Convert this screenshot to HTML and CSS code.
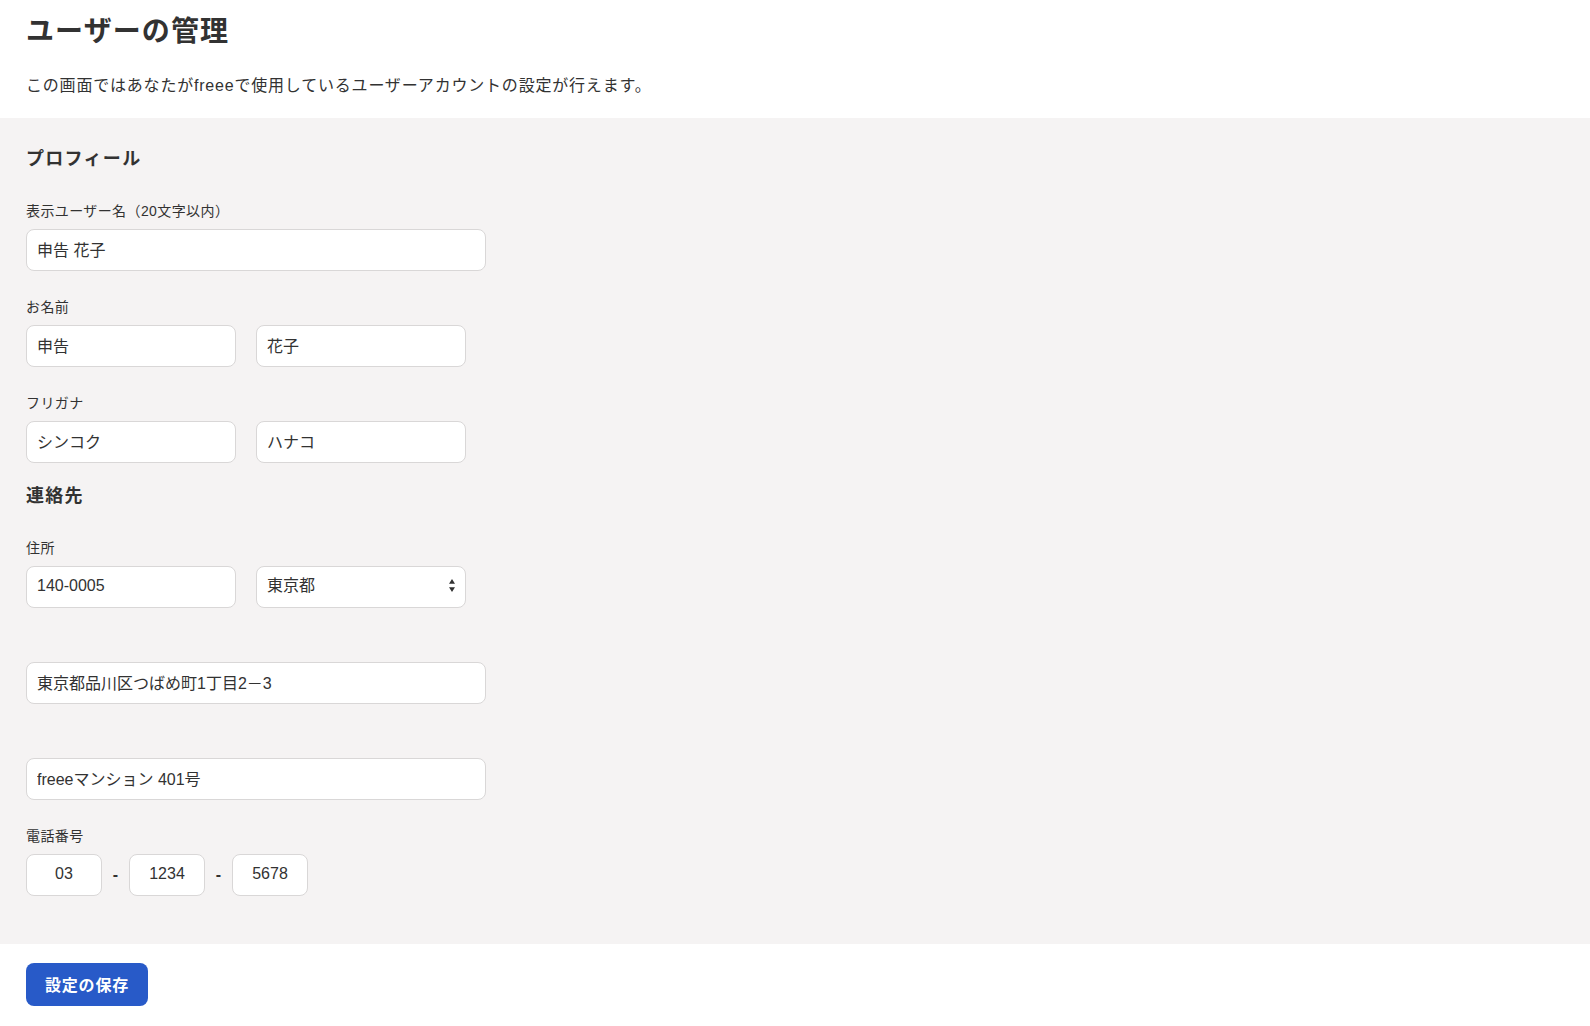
FILE: index.html
```html
<!DOCTYPE html>
<html lang="ja">
<head>
<meta charset="utf-8">
<title>ユーザーの管理</title>
<link rel="stylesheet" href="styles.css">
</head>
<body>
<header class="page-header">
  <h1 class="page-title">ユーザーの管理</h1>
  <p class="page-lead">この画面ではあなたがfreeeで使用しているユーザーアカウントの設定が行えます。</p>
</header>
<main class="panel">
  <section class="section">
    <h2 class="section-title">プロフィール</h2>
    <div class="field">
      <label class="field-label">表示ユーザー名（20文字以内）</label>
      <input class="input input-wide" type="text" value="申告 花子">
    </div>
    <div class="field">
      <label class="field-label">お名前</label>
      <div class="row">
        <input class="input input-half" type="text" value="申告">
        <input class="input input-half" type="text" value="花子">
      </div>
    </div>
    <div class="field">
      <label class="field-label">フリガナ</label>
      <div class="row">
        <input class="input input-half" type="text" value="シンコク">
        <input class="input input-half" type="text" value="ハナコ">
      </div>
    </div>
  </section>
  <section class="section section-contact">
    <h2 class="section-title">連絡先</h2>
    <div class="field">
      <label class="field-label">住所</label>
      <div class="row">
        <input class="input input-half" type="text" value="140-0005">
        <div class="select-wrap">
          <select class="input select">
            <option>東京都</option>
          </select>
          <svg class="select-arrows" width="6" height="13" viewBox="0 0 6 13" aria-hidden="true">
            <path d="M3 0 L6 4.8 L0 4.8 Z M0 8.2 L6 8.2 L3 13 Z" fill="#323232"/>
          </svg>
        </div>
      </div>
    </div>
    <div class="field">
      <label class="field-label"></label>
      <input class="input input-wide" type="text" value="東京都品川区つばめ町1丁目2－3">
    </div>
    <div class="field">
      <label class="field-label"></label>
      <input class="input input-wide" type="text" value="freeeマンション 401号">
    </div>
    <div class="field">
      <label class="field-label">電話番号</label>
      <div class="phone-row">
        <input class="input input-phone" type="text" value="03">
        <span class="phone-dash">-</span>
        <input class="input input-phone" type="text" value="1234">
        <span class="phone-dash">-</span>
        <input class="input input-phone" type="text" value="5678">
      </div>
    </div>
  </section>
</main>
<footer class="page-footer">
  <button class="btn-primary" type="button">設定の保存</button>
</footer>
</body>
</html>
```
FILE: styles.css
```css
* {
  box-sizing: border-box;
}

html, body {
  margin: 0;
  padding: 0;
  background: #ffffff;
}

body {
  font-family: "Liberation Sans", "Noto Sans CJK JP", sans-serif;
  color: #323232;
  font-size: 16px;
}

.page-header {
  padding: 11px 26px 20px;
}

.page-title {
  margin: 0;
  font-size: 28px;
  line-height: 42px;
  font-weight: 700;
  letter-spacing: 1.1px;
}

.page-lead {
  margin: 21px 0 0;
  font-size: 16px;
  line-height: 24px;
  letter-spacing: 0.8px;
}

.panel {
  background: #f5f3f3;
  padding: 28px 26px 48px;
}

.section-contact {
  margin-top: 20px;
}

.section-title {
  margin: 0 0 28px;
  font-size: 18px;
  line-height: 27px;
  font-weight: 700;
  letter-spacing: 1.3px;
}

.field {
  display: flex;
  flex-direction: column;
  align-items: flex-start;
  margin-bottom: 26px;
}

.field:last-child {
  margin-bottom: 0;
}

.field-label {
  display: block;
  font-size: 14px;
  line-height: 20px;
  height: 20px;
  margin-bottom: 8px;
  letter-spacing: 0.4px;
}

.row {
  display: flex;
  gap: 20px;
}

.input {
  height: 42px;
  border: 1px solid #d9d7d7;
  border-radius: 8px;
  background: #ffffff;
  padding: 0 10px 3px;
  font-family: "Liberation Sans", "Noto Sans CJK JP", sans-serif;
  font-size: 16px;
  color: #323232;
  outline: none;
  margin: 0;
}

.input-wide {
  width: 460px;
}

.input-half {
  width: 210px;
}

.select-wrap {
  position: relative;
  width: 210px;
}

.select {
  width: 210px;
  appearance: none;
  -webkit-appearance: none;
}

.select-arrows {
  position: absolute;
  right: 11px;
  top: 13px;
  pointer-events: none;
}

.phone-row {
  display: flex;
  align-items: center;
  gap: 10.5px;
}

.input-phone {
  width: 76px;
  text-align: center;
}

.phone-dash {
  font-size: 16px;
  font-weight: 700;
  width: 6px;
  text-align: center;
}

.page-footer {
  padding: 19px 26px;
}

.btn-primary {
  height: 43px;
  padding: 0 0 2px;
  width: 122px;
  border: none;
  border-radius: 8px;
  background: #285ac8;
  color: #ffffff;
  font-family: "Liberation Sans", "Noto Sans CJK JP", sans-serif;
  font-size: 16px;
  font-weight: 700;
  letter-spacing: 0.8px;
  cursor: pointer;
}
```
